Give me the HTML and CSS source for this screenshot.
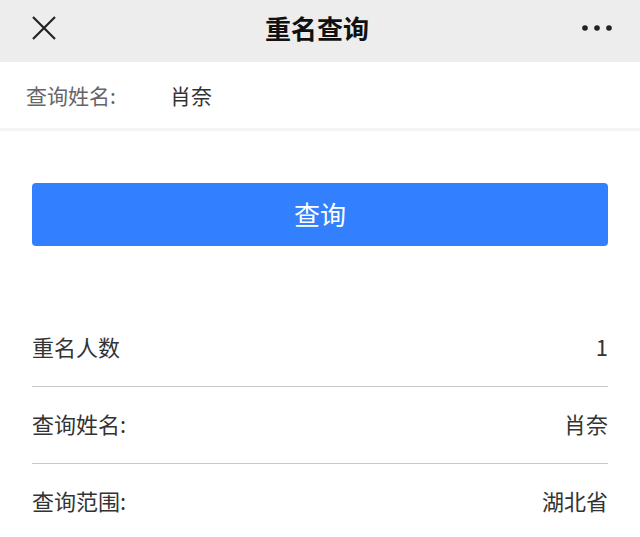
FILE: index.html
```html
<!DOCTYPE html>
<html lang="zh-CN">
<head>
    <meta charset="UTF-8">
    <meta name="viewport" content="width=device-width, initial-scale=1.0">
    <title>重名查询</title>
    <link rel="stylesheet" href="styles.css">
</head>
<body>
    <header class="topbar">
        <span class="close-icon">
            <svg width="24" height="24" viewBox="0 0 24 24">
                <path d="M1 1 L23 23 M23 1 L1 23" stroke="#222" stroke-width="2.2" fill="none"/>
            </svg>
        </span>
        <h1 class="title">重名查询</h1>
        <span class="more-icon">
            <svg width="30" height="8" viewBox="0 0 30 8">
                <circle cx="3" cy="4" r="2.8" fill="#222"/>
                <circle cx="15" cy="4" r="2.8" fill="#222"/>
                <circle cx="27" cy="4" r="2.8" fill="#222"/>
            </svg>
        </span>
    </header>

    <!-- Search Input -->
    <div class="search-row">
        <span class="search-label">查询姓名:</span>
        <span class="search-value">肖奈</span>
    </div>

    <main class="content">
        <button class="query-btn">查询</button>

        <!-- Results -->
        <div class="result-list">
            <div class="result-item">
                <span>重名人数</span>
                <span>1</span>
            </div>
            <div class="result-item">
                <span>查询姓名:</span>
                <span>肖奈</span>
            </div>
            <div class="result-item">
                <span>查询范围:</span>
                <span>湖北省</span>
            </div>
        </div>
    </main>
</body>
</html>
```

FILE: styles.css
```css
/* General Styles */
body {
    margin: 0;
    padding: 0;
    background-color: #fff;
    color: #333;
    font-family: "Noto Sans CJK SC", "Noto Sans", sans-serif;
}

/* Top Bar */
.topbar {
    display: flex;
    align-items: center;
    height: 62px;
    padding: 0 28px 0 32px;
    background-color: #ededed;
}

.close-icon,
.more-icon {
    display: flex;
    align-items: center;
}

.close-icon {
    width: 40px;
    margin-top: -6px;
}

.more-icon {
    width: 50px;
    justify-content: flex-end;
    margin-top: -6px;
}

.title {
    flex: 1;
    margin: -6px 0 0 0;
    text-align: center;
    font-size: 26px;
    font-weight: bold;
    color: #111;
    line-height: 1;
}

/* Search Row */
.search-row {
    display: flex;
    align-items: center;
    height: 66px;
    padding: 0 26px;
    font-size: 21px;
    border-bottom: 3px solid #f4f4f4;
}

.search-label {
    width: 144px;
    color: #666;
}

.search-value {
    color: #333;
}

/* Content */
.content {
    padding: 0 32px;
}

.query-btn {
    display: block;
    width: 100%;
    height: 63px;
    margin-top: 52px;
    padding-bottom: 4px;
    border: none;
    border-radius: 4px;
    background-color: #3380fe;
    color: #fff;
    font-family: inherit;
    font-size: 26px;
    cursor: pointer;
}

.result-list {
    margin-top: 64px;
}

.result-item {
    display: flex;
    align-items: center;
    justify-content: space-between;
    box-sizing: border-box;
    height: 77px;
    padding-bottom: 5px;
    font-size: 22px;
    color: #333;
    border-bottom: 1px solid #c8c8c8;
}

.result-item:last-child {
    border-bottom: none;
}
```
